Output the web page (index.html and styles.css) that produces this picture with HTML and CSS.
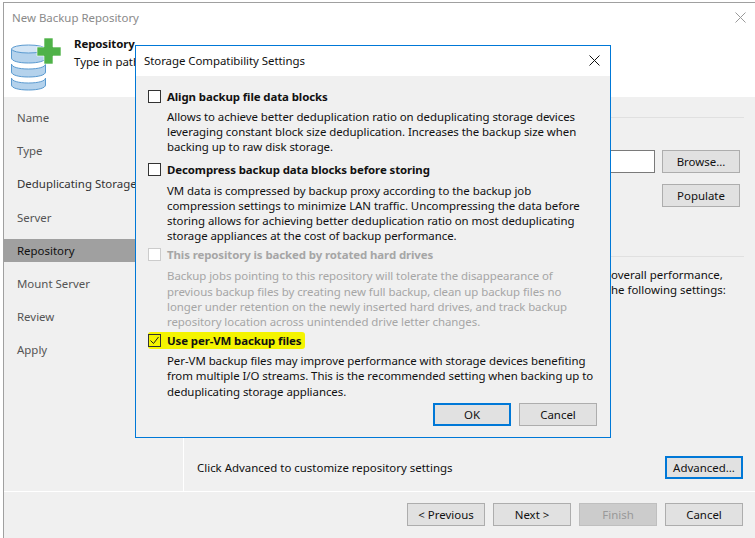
FILE: index.html
```html
<!DOCTYPE html>
<html lang="en">
  <head>
    <meta charset="UTF-8" />
    <title>New Backup Repository</title>
    <link rel="stylesheet" href="styles.css">
  </head>
  <body>
    <div class="wizard">
      <div class="titlebar">
        <span class="title">New Backup Repository</span>
        <svg class="close close-off" width="11" height="11" viewBox="0 0 11 11"><path d="M.5.5l10 10M10.5.5l-10 10" /></svg>
      </div>
      <div class="header">
        <svg class="logo" width="52" height="54" viewBox="0 0 52 54">
          <g fill="#b4d2ec" stroke="#5a9ad0">
            <path d="M1.5 41v7c0 3 7 5 17 5s17-2 17-5v-7c0 3-7 5-17 5s-17-2-17-5z" />
            <path d="M1.5 27v8c0 3 7 5 17 5s17-2 17-5v-8c0 3-7 5-17 5s-17-2-17-5z" />
            <path d="M1.5 12v9c0 3 7 5 17 5s17-2 17-5v-9z" />
            <ellipse cx="18.5" cy="12" rx="17" ry="4" fill="#d3e5f5" />
          </g>
          <path d="M34 1h9v9h8v9h-8v8h-9v-8h-7v-9h7z" fill="#4fb248" stroke="#fff" stroke-width=".6" />
        </svg>
        <div class="header-text">
          <b>Repository</b>
          <span>Type in path</span>
        </div>
      </div>
      <div class="main">
        <ul class="steps">
          <li>Name</li>
          <li>Type</li>
          <li class="dark">Deduplicating Storage</li>
          <li>Server</li>
          <li class="current">Repository</li>
          <li>Mount Server</li>
          <li>Review</li>
          <li>Apply</li>
        </ul>
        <div class="content">
          <hr class="rule" />
          <div class="path-row">
            <input class="path-input" type="text" />
            <div class="path-buttons">
              <button>Browse...</button>
              <button>Populate</button>
            </div>
          </div>
          <hr class="rule rule-low" />
          <p class="note">
            <span>overall performance,</span>
            <span>he following settings:</span>
          </p>
          <div class="advanced-row">
            <span>Click Advanced to customize repository settings</span>
            <button class="focused">Advanced...</button>
          </div>
        </div>
      </div>
      <div class="footer">
        <button>&lt; Previous</button>
        <button>Next &gt;</button>
        <button class="disabled">Finish</button>
        <button>Cancel</button>
      </div>
    </div>

    <div class="dialog">
      <div class="dialog-title">
        <span>Storage Compatibility Settings</span>
        <svg class="close" width="11" height="11" viewBox="0 0 11 11"><path d="M.5.5l10 10M10.5.5l-10 10" /></svg>
      </div>
      <div class="dialog-body">
        <div class="option opt-align">
          <div class="check-row"><span class="box"></span><b>Align backup file data blocks</b></div>
          <p>Allows to achieve better deduplication ratio on deduplicating storage devices<br />leveraging constant block size deduplication. Increases the backup size when<br />backing up to raw disk storage.</p>
        </div>
        <div class="option opt-decompress">
          <div class="check-row"><span class="box"></span><b>Decompress backup data blocks before storing</b></div>
          <p>VM data is compressed by backup proxy according to the backup job<br />compression settings to minimize LAN traffic. Uncompressing the data before<br />storing allows for achieving better deduplication ratio on most deduplicating<br />storage appliances at the cost of backup performance.</p>
        </div>
        <div class="option opt-rotated off">
          <div class="check-row"><span class="box"></span><b>This repository is backed by rotated hard drives</b></div>
          <p>Backup jobs pointing to this repository will tolerate the disappearance of<br />previous backup files by creating new full backup, clean up backup files no<br />longer under retention on the newly inserted hard drives, and track backup<br />repository location across unintended drive letter changes.</p>
        </div>
        <div class="option opt-pervm">
          <div class="check-row marked">
            <span class="box">
              <svg width="11" height="11" viewBox="0 0 11 11"><path d="M1.5 5.5l3 3 5-6.5" /></svg>
            </span>
            <b>Use per-VM backup files</b>
          </div>
          <p>Per-VM backup files may improve performance with storage devices benefiting<br />from multiple I/O streams. This is the recommended setting when backing up to<br />deduplicating storage appliances.</p>
        </div>
        <div class="dialog-buttons">
          <button class="focused">OK</button>
          <button>Cancel</button>
        </div>
      </div>
    </div>
  </body>
</html>
```

FILE: styles.css
```css
* {
  box-sizing: border-box;
}
html,
body {
  margin: 0;
  height: 100%;
  overflow: hidden;
}
body {
  font-family: "Noto Sans", Arial, sans-serif;
  font-size: 11.45px;
  line-height: 15px;
  color: #111;
  background-color: #fff;
}
button {
  width: 78px;
  height: 23px;
  padding: 0;
  font: inherit;
  color: #111;
  background-color: #e1e1e1;
  border: 1px solid #adadad;
}
button.focused {
  border: 2px solid #0078d7;
}
button.disabled {
  color: #999;
  background-color: #ccc;
  border-color: #bfbfbf;
}
hr {
  margin: 0;
  border: 0;
  height: 1px;
  background-color: #e0e0e0;
}
b {
  letter-spacing: -0.1px;
  white-space: nowrap;
}

/* wizard behind the dialog */
.wizard {
  display: flex;
  flex-direction: column;
  height: 536px;
  margin: 2px 0 0 3px;
  border-top: 1px solid #a0a0a0;
  border-left: 1px solid #a0a0a0;
}
.titlebar {
  display: flex;
  justify-content: space-between;
  align-items: center;
  height: 29px;
  padding: 0 9px 0 8px;
  color: #8a8a8a;
}
.close {
  fill: none;
  stroke: #111;
}
.close-off {
  stroke: #999;
}
.header {
  display: flex;
  height: 65px;
  padding-left: 6px;
}
.logo {
  margin-top: 5px;
}
.header-text {
  display: flex;
  flex-direction: column;
  gap: 3px;
  margin-left: 12px;
  padding-top: 4px;
}
.main {
  display: flex;
  flex: 1;
  background-color: #f0f0f0;
  border-bottom: 1px solid #fff;
}
.steps {
  width: 180px;
  margin: 0;
  padding: 4px 0 0;
  list-style: none;
  border-right: 1px solid #fff;
  color: #555;
}
.steps li {
  height: 33.2px;
  padding-left: 13px;
  line-height: 33px;
}
.steps .dark {
  color: #333;
}
.steps .current {
  height: 23px;
  margin: 5px 0;
  line-height: 23px;
  color: #111;
  background-color: #a0a0a0;
}
.content {
  display: flex;
  flex-direction: column;
  flex: 1;
  padding: 20px 11px 0 13px;
}
.path-row {
  display: flex;
  justify-content: flex-end;
  gap: 7px;
  margin-top: 32px;
  padding-right: 4px;
}
.path-input {
  width: 300px;
  height: 23px;
  background-color: #fff;
  border: 1px solid #7a7a7a;
}
.path-buttons {
  display: flex;
  flex-direction: column;
  gap: 11px;
}
.rule-low {
  margin-top: 49px;
}
.note {
  display: flex;
  flex-direction: column;
  align-items: flex-start;
  margin: 10px 0 0 414px;
  white-space: nowrap;
}
.advanced-row {
  display: flex;
  justify-content: space-between;
  align-items: center;
  margin-top: auto;
  margin-bottom: 12px;
  margin-right: 1px;
}
.footer {
  display: flex;
  justify-content: flex-end;
  gap: 8px;
  height: 46px;
  padding: 11px 12px 0 0;
  background-color: #f0f0f0;
}

/* modal dialog */
.dialog {
  position: absolute;
  left: 135px;
  top: 45px;
  width: 476px;
  height: 393px;
  background-color: #f0f0f0;
  border: 1px solid #0078d7;
}
.dialog-title {
  display: flex;
  justify-content: space-between;
  align-items: center;
  height: 30px;
  padding: 0 10px 2px 8px;
  background-color: #fff;
  letter-spacing: -0.05px;
}
.dialog-body {
  padding: 13px 13px 0 12px;
}
.option p {
  margin: 5px 0 0 19px;
  line-height: 15.2px;
  letter-spacing: -0.05px;
  white-space: nowrap;
}
.check-row {
  display: flex;
  align-items: center;
  gap: 6px;
  height: 15px;
}
.box {
  display: flex;
  align-items: center;
  justify-content: center;
  width: 13px;
  height: 13px;
  background-color: #fff;
  border: 1px solid #333;
}
.box svg {
  fill: none;
  stroke: #222;
}
.opt-decompress {
  margin-top: 7px;
}
.opt-decompress p,
.opt-rotated p {
  margin-top: 6px;
}
.opt-rotated {
  margin-top: 4px;
}
.opt-pervm {
  margin-top: 3px;
}
.off {
  color: #a6a6a6;
}
.off .box {
  border-color: #ccc;
}
.marked {
  width: 157px;
  height: 17px;
  margin-top: 3px;
  margin-bottom: -1px;
  background-color: #f4f400;
  border-radius: 3px;
}
.marked .box {
  background-color: transparent;
}
.dialog-buttons {
  display: flex;
  justify-content: flex-end;
  gap: 8px;
  margin-top: 4px;
}
```
